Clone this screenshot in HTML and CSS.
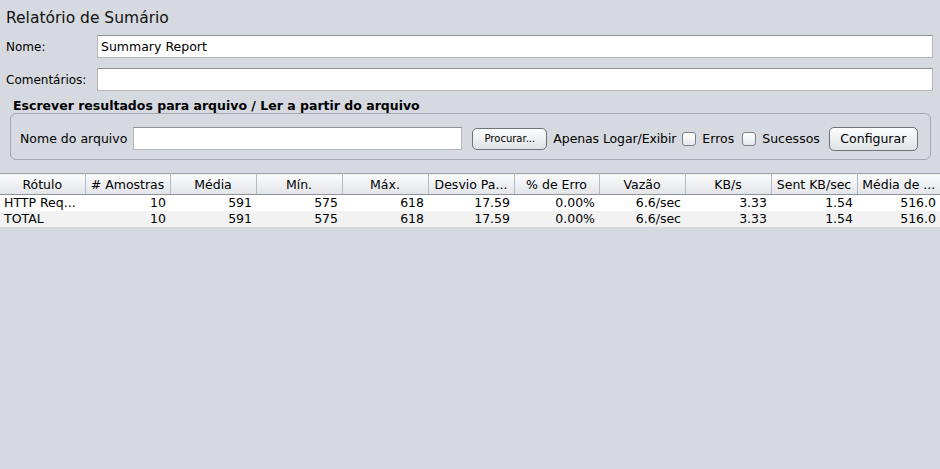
FILE: index.html
```html
<!DOCTYPE html>
<html lang="pt">
<head>
<meta charset="utf-8">
<title>Relatório de Sumário</title>
<link rel="stylesheet" href="styles.css">
</head>
<body>
<div class="page">
  <div class="title">Relatório de Sumário</div>
  <div class="field-row first">
    <label class="field-label">Nome:</label>
    <div class="text-input">Summary Report</div>
  </div>
  <div class="field-row second">
    <label class="field-label">Comentários:</label>
    <div class="text-input"></div>
  </div>
  <div class="section-title">Escrever resultados para arquivo / Ler a partir do arquivo</div>
  <div class="file-panel">
    <span class="plain">Nome do arquivo</span>
    <div class="text-input file-input"></div>
    <button class="btn btn-small">Procurar...</button>
    <span class="plain only-log">Apenas Logar/Exibir</span>
    <span class="checkbox cb-errors"></span>
    <span class="plain cb-label">Erros</span>
    <span class="checkbox cb-success"></span>
    <span class="plain cb-label">Sucessos</span>
    <button class="btn btn-config">Configurar</button>
  </div>
</div>
<table class="report">
  <colgroup>
    <col class="c85"><col class="c85"><col class="c86"><col class="c86"><col class="c86"><col class="c86"><col class="c85"><col class="c86"><col class="c86"><col class="c86"><col class="c83">
  </colgroup>
  <thead>
    <tr>
      <th>Rótulo</th><th># Amostras</th><th>Média</th><th>Mín.</th><th>Máx.</th><th>Desvio Pa...</th><th>% de Erro</th><th>Vazão</th><th>KB/s</th><th>Sent KB/sec</th><th>Média de ...</th>
    </tr>
  </thead>
  <tbody>
    <tr>
      <td class="txt">HTTP Req...</td><td>10</td><td>591</td><td>575</td><td>618</td><td>17.59</td><td>0.00%</td><td>6.6/sec</td><td>3.33</td><td>1.54</td><td>516.0</td>
    </tr>
    <tr class="alt">
      <td class="txt">TOTAL</td><td>10</td><td>591</td><td>575</td><td>618</td><td>17.59</td><td>0.00%</td><td>6.6/sec</td><td>3.33</td><td>1.54</td><td>516.0</td>
    </tr>
  </tbody>
</table>
</body>
</html>
```
FILE: styles.css
```css
html, body {
  margin: 0;
  padding: 0;
  background: #d6d9df;
  font-family: "DejaVu Sans", sans-serif;
  font-size: 12px;
  color: #000;
}
.page {
  padding: 9px 7px 0 6px;
}
.title {
  font-size: 15.5px;
  line-height: 18px;
  height: 18px;
  color: #111;
}
.field-row {
  display: flex;
  align-items: center;
  height: 23px;
}
.field-row.first { margin-top: 8px; }
.field-row.second { margin-top: 10px; }
.field-label {
  width: 91px;
  flex: none;
}
.text-input {
  flex: 1;
  box-sizing: border-box;
  height: 23px;
  background: #fff;
  border: 1px solid #b5b7ba;
  border-top-color: #8e8f91;
  padding: 0 3px;
  line-height: 21px;
  font-size: 12.5px;
}
.section-title {
  margin: 7px 0 0 7px;
  font-weight: bold;
  font-size: 12.5px;
  line-height: 15px;
  height: 15px;
}
.file-panel {
  margin: 0 2px 0 4px;
  height: 47px;
  box-sizing: border-box;
  border: 1px solid #a4a8ae;
  border-radius: 6px;
  display: flex;
  align-items: center;
  padding: 4px 0 0 9px;
  font-size: 12.5px;
}
.plain { white-space: nowrap; }
.file-input {
  flex: none;
  width: 329px;
  margin-left: 6px;
}
.btn {
  font-family: "DejaVu Sans", sans-serif;
  color: #000;
  border: 1px solid #6f7378;
  border-radius: 5px;
  background: linear-gradient(#fdfdfd, #eceef1 55%, #dfe2e6);
  padding: 0;
  box-sizing: border-box;
}
.btn-small {
  width: 75px;
  height: 22px;
  font-size: 10px;
  margin-left: 10px;
}
.only-log { margin-left: 6px; letter-spacing: -0.1px; }
.checkbox {
  width: 14px;
  height: 14px;
  box-sizing: border-box;
  border: 1px solid #7d8186;
  border-radius: 3px;
  background: linear-gradient(#ffffff, #e6e8ec);
  flex: none;
}
.cb-errors { margin-left: 6px; }
.cb-success { margin-left: 8px; }
.cb-label { margin-left: 6px; }
.btn-config {
  width: 89px;
  height: 24px;
  font-size: 12.5px;
  margin-left: 9px;
}
.report {
  margin-top: 13px;
  width: 940px;
  table-layout: fixed;
  border-collapse: collapse;
  border-spacing: 0;
}
.c85 { width: 85px; }
.c86 { width: 86px; }
.c83 { width: 83px; }
.report th {
  font-weight: normal;
  font-size: 12.5px;
  height: 21px;
  padding: 0 2px;
  box-sizing: border-box;
  background: linear-gradient(#fbfbfc, #eceef1 60%, #e2e4e8);
  border-top: 1px solid #9ea2a8;
  border-bottom: 1px solid #8f939a;
  border-right: 1px solid #b6b9bf;
  white-space: nowrap;
  overflow: hidden;
  text-align: center;
}
.report th:last-child { border-right: none; }
.report td {
  height: 16px;
  padding: 0 4px 0 4px;
  line-height: 16px;
  font-size: 12.5px;
  text-align: right;
  background: #fff;
  white-space: nowrap;
  overflow: hidden;
}
.report td.txt { text-align: left; }
.report tr.alt td { background: #f2f2f2; }
```
